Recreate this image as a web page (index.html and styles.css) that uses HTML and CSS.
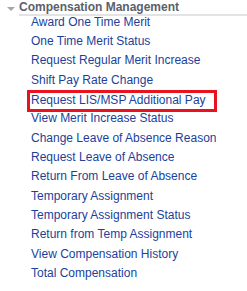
FILE: index.html
```html
<!DOCTYPE html>
<html lang="en">
  <head>
    <meta charset="UTF-8" />
    <title>Compensation Management</title>
    <link rel="stylesheet" href="styles.css">
  </head>
  <body>
    <div class="menu">
      <div class="menu__header">
        <span class="menu__toggle"></span>
        <span class="menu__title">Compensation Management</span>
      </div>
      <ul class="menu__list">
        <li><a href="#">Award One Time Merit</a></li>
        <li><a href="#">One Time Merit Status</a></li>
        <li><a href="#">Request Regular Merit Increase</a></li>
        <li><a href="#">Shift Pay Rate Change</a></li>
        <li class="highlight"><a href="#">Request LIS/MSP Additional Pay</a></li>
        <li><a href="#">View Merit Increase Status</a></li>
        <li><a href="#">Change Leave of Absence Reason</a></li>
        <li><a href="#">Request Leave of Absence</a></li>
        <li><a href="#">Return From Leave of Absence</a></li>
        <li><a href="#">Temporary Assignment</a></li>
        <li><a href="#">Temporary Assignment Status</a></li>
        <li><a href="#">Return from Temp Assignment</a></li>
        <li><a href="#">View Compensation History</a></li>
        <li><a href="#">Total Compensation</a></li>
      </ul>
    </div>
  </body>
</html>
```

FILE: styles.css
```css
* {
  margin: 0;
  padding: 0;
  box-sizing: border-box;
}

body {
  background: #ffffff;
  font-family: "Liberation Sans", Arial, sans-serif;
}

.menu__header {
  display: flex;
  align-items: flex-start;
  height: 16px;
}

.menu__toggle {
  width: 0;
  height: 0;
  margin: 7px 4px 0 7px;
  border-left: 4px solid transparent;
  border-right: 4px solid transparent;
  border-top: 4px solid #a6a6a6;
}

.menu__title {
  flex: 1;
  font-size: 12px;
  font-weight: bold;
  color: #5b6069;
  line-height: 14px;
  border-bottom: 2px solid #e3e3e3;
}

.menu__list {
  list-style: none;
  margin-top: -3.5px;
  padding-left: 31px;
}

.menu__list li {
  height: 19.35px;
  line-height: 19.35px;
  font-size: 12px;
}

.menu__list a {
  color: #203f9c;
  text-decoration: none;
}

.menu__list .highlight {
  height: 22px;
  width: 190px;
  margin: 0 0 -2.65px -4px;
  padding: 0 0 2px 1px;
  border: 3px solid #e8131f;
  line-height: 14px;
}
```
